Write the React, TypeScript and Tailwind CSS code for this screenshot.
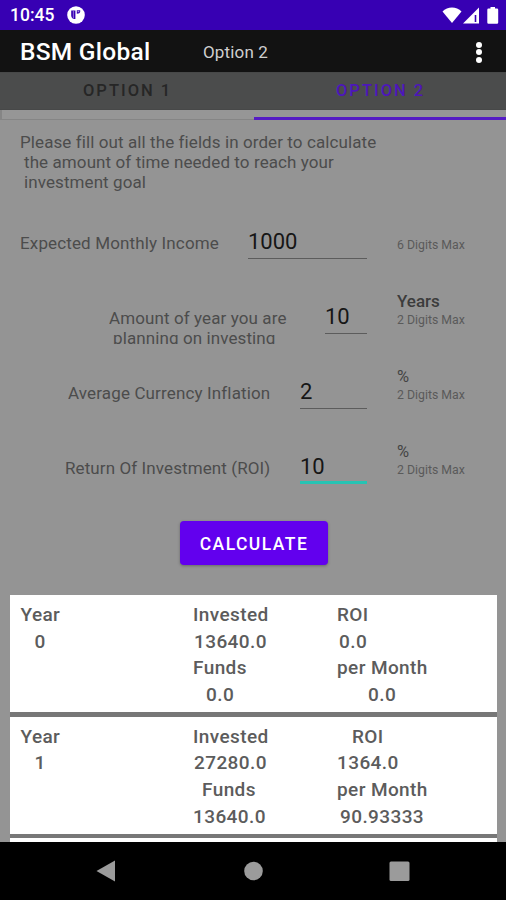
import type { ReactNode } from "react";

type Field = {
  label: ReactNode;
  labelClass: string;
  value: string;
  inputClass: string;
  unit?: string;
  unitClass?: string;
  hint: string;
  rowClass: string;
};

const fields: Field[] = [
  {
    label: "Expected Monthly Income",
    labelClass: "ml-[20px] w-[228px] tracking-[0.14px]",
    value: "1000",
    inputClass: "w-[119px] border-b border-[#5c5c5c]",
    hint: "6 Digits Max",
    rowClass: "h-[75px]",
  },
  {
    label: (
      <>
        Amount of year you are
        <br />
        <span className="pl-1">planning on investing</span>
      </>
    ),
    labelClass: "ml-[109px] w-[216px] tracking-[0.1px]",
    value: "10",
    inputClass: "w-[42px] border-b border-[#5c5c5c]",
    unit: "Years",
    unitClass: "font-medium text-[#3c3c3c] text-[17px]",
    hint: "2 Digits Max",
    rowClass: "h-[75px]",
  },
  {
    label: "Average Currency Inflation",
    labelClass: "ml-[68px] w-[232px] tracking-[0.14px]",
    value: "2",
    inputClass: "w-[67px] border-b border-[#5c5c5c]",
    unit: "%",
    unitClass: "text-[#444] text-[16.5px] pt-px",
    hint: "2 Digits Max",
    rowClass: "h-[75px]",
  },
  {
    label: "Return Of Investment (ROI)",
    labelClass: "ml-[65px] w-[235px] tracking-[0.1px]",
    value: "10",
    inputClass: "w-[67px] border-b-[3px] border-[#26c3b3]",
    unit: "%",
    unitClass: "text-[#444] text-[16.5px] pt-px",
    hint: "2 Digits Max",
    rowClass: "h-[76px]",
  },
];

type Cell = { text: string; pad: string };
type Result = { year: string; middle: Cell[]; right: Cell[] };

const results: Result[] = [
  {
    year: "0",
    middle: [
      { text: "Invested", pad: "pl-0" },
      { text: "13640.0", pad: "pl-[1px]" },
      { text: "Funds", pad: "pl-0" },
      { text: "0.0", pad: "pl-[13px]" },
    ],
    right: [
      { text: "ROI", pad: "pl-0" },
      { text: "0.0", pad: "pl-[2px]" },
      { text: "per Month", pad: "pl-0" },
      { text: "0.0", pad: "pl-[31px]" },
    ],
  },
  {
    year: "1",
    middle: [
      { text: "Invested", pad: "pl-0" },
      { text: "27280.0", pad: "pl-[1px]" },
      { text: "Funds", pad: "pl-[9px]" },
      { text: "13640.0", pad: "pl-0" },
    ],
    right: [
      { text: "ROI", pad: "pl-[15px]" },
      { text: "1364.0", pad: "pl-0" },
      { text: "per Month", pad: "pl-0" },
      { text: "90.93333", pad: "pl-[3px]" },
    ],
  },
];

function StatusBar() {
  return (
    <div className="flex h-[30px] items-center bg-[#3700b3] pl-[10px] pr-[7px] text-white">
      <span className="w-[57px] pt-[2px] text-[17.5px] font-medium leading-none">10:45</span>
      <svg className="h-[18px] w-[18px]" viewBox="0 0 18 18">
        <circle cx="9" cy="9" r="8.800" fill="#fff" />
        <path d="M4.200 4.500h4.200v8.600H6.600C4.800 12.300 4 10.800 4.200 8.500z" fill="#3700b3" />
        <path d="M6.400 5v7.600" stroke="#8f70d6" strokeWidth="1" />
        <path d="M9.800 4.300h3.400v1.500c-.2 1.300-1.300 2-3.400 2z" fill="#3700b3" />
        <path d="M10.600 4.800h1.600v1.400h-1.600z" fill="#a48be0" />
      </svg>
      <div className="flex-1" />
      <svg className="h-[18px] w-[57px]" viewBox="0 0 57 18" fill="#fff">
        <path d="M0.500 5.500 C5.500 .3 14.500 .3 19.500 5.500 L10 17z" />
        <path d="M37 1.500V17.500H21z" />
        <path d="M33.500 9v7" stroke="#3700b3" strokeWidth="1.600" />
        <path d="M46.500 2.600h2V1h4.500v1.600h2q1.200 0 1.200 1.200V16.500q0 1.200-1.200 1.200h-8.500q-1.200 0-1.200-1.200V3.800q0-1.200 1.200-1.200z" />
      </svg>
    </div>
  );
}

function AppBar() {
  return (
    <div className="flex h-[42px] items-center bg-[#121212] pl-[20px] pr-[24px]">
      <span className="w-[183px] pt-[3px] text-[24.5px] font-medium leading-none tracking-[0.25px] text-white">BSM Global</span>
      <span className="flex-1 pt-[2px] text-[17px] leading-none tracking-[0.15px] text-[#cfcfcf]">Option 2</span>
      <div className="flex flex-col gap-[1.500px] pt-[2px]">
        <i className="h-[6px] w-[6px] rounded-full bg-white" />
        <i className="h-[6px] w-[6px] rounded-full bg-white" />
        <i className="h-[6px] w-[6px] rounded-full bg-white" />
      </div>
    </div>
  );
}

function Tabs() {
  return (
    <div className="h-[48px]">
      <div className="flex h-[38px] border-b border-t border-[#474848] bg-[#4b4c4c] text-[16.5px] font-medium leading-[36px] tracking-[2px]">
        <div className="w-[253px] pl-[83px] text-[#262626]">OPTION 1</div>
        <div className="w-[253px] pl-[83px] text-[#4d16ba]">OPTION 2</div>
      </div>
      <div className="flex h-[10px] bg-[#969696]">
        <div className="w-[254px] border-b border-l-2 border-[#858585]" />
        <div className="flex flex-1 items-end">
          <div className="h-[3px] w-full bg-[#551bc4]" />
        </div>
      </div>
    </div>
  );
}

function FormRow({ f }: { f: Field }) {
  return (
    <div className={`flex ${f.rowClass}`}>
      <div className={`mt-[28px] h-[36px] shrink-0 overflow-hidden whitespace-nowrap text-[17px] leading-[20px] text-[#4c4c4c] ${f.labelClass}`}>
        {f.label}
      </div>
      <div className={`h-[54px] shrink-0 pt-[24px] text-[22px] leading-[25px] text-[#161616] ${f.inputClass}`}>{f.value}</div>
      <div className="ml-[30px] pt-[11px]">
        <div className={`h-[20px] leading-[20px] ${f.unitClass ?? ""}`}>{f.unit}</div>
        <div className="text-[12.3px] leading-[18px] text-[#5a5a5a]">{f.hint}</div>
      </div>
    </div>
  );
}

function ResultCard({ r }: { r: Result }) {
  return (
    <div className="flex h-[117px] bg-white pl-[10.5px] pt-[7px] text-[19px] font-medium leading-[26.7px] tracking-[0.4px] text-[#5c5c5c]">
      <div className="w-[172.5px]">
        <div>Year</div>
        <div className="pl-[14px]">{r.year}</div>
      </div>
      <div className="w-[144px]">
        {r.middle.map((c, i) => (
          <div key={i} className={c.pad}>{c.text}</div>
        ))}
      </div>
      <div>
        {r.right.map((c, i) => (
          <div key={i} className={c.pad}>{c.text}</div>
        ))}
      </div>
    </div>
  );
}

export default function App() {
  return (
    <div className="flex h-[900px] w-[506px] flex-col overflow-hidden bg-[#949494] font-[Roboto,sans-serif]">
      <StatusBar />
      <AppBar />
      <Tabs />
      <p className="h-[85px] whitespace-nowrap pl-[20px] pt-[12px] text-[17px] leading-[20px] tracking-[0.09px] text-[#4c4c4c]">
        Please fill out all the fields in order to calculate
        <br />
        <span className="pl-1">the amount of time needed to reach your</span>
        <br />
        <span className="pl-1">investment goal</span>
      </p>
      {fields.map((f, i) => (
        <FormRow key={i} f={f} />
      ))}
      <div className="flex h-[89px] justify-center pl-px pt-[15px]">
        <button className="h-[44px] w-[148px] rounded-[4px] bg-[#6200ee] pl-px pt-[2px] text-[17.5px] font-medium tracking-[1.45px] text-white shadow-[0_1px_3px_rgba(0,0,0,0.3)]">
          CALCULATE
        </button>
      </div>
      <div className="mx-[10px] flex h-[247px] w-[487px] shrink-0 flex-col gap-[4.5px] overflow-hidden bg-[#777]">
        {results.map((r) => (
          <ResultCard key={r.year} r={r} />
        ))}
        <div className="flex-1 bg-white" />
      </div>
      <div className="flex flex-1 items-center bg-black">
        <svg className="h-[58px] w-[506px]" viewBox="0 0 506 58" fill="#9b9b9b">
          <path d="M96.500 29L115 18.500V39.500z" />
          <circle cx="253.500" cy="29" r="9.300" />
          <rect x="389.500" y="19.500" width="20" height="19.500" rx="1.500" />
        </svg>
      </div>
    </div>
  );
}
